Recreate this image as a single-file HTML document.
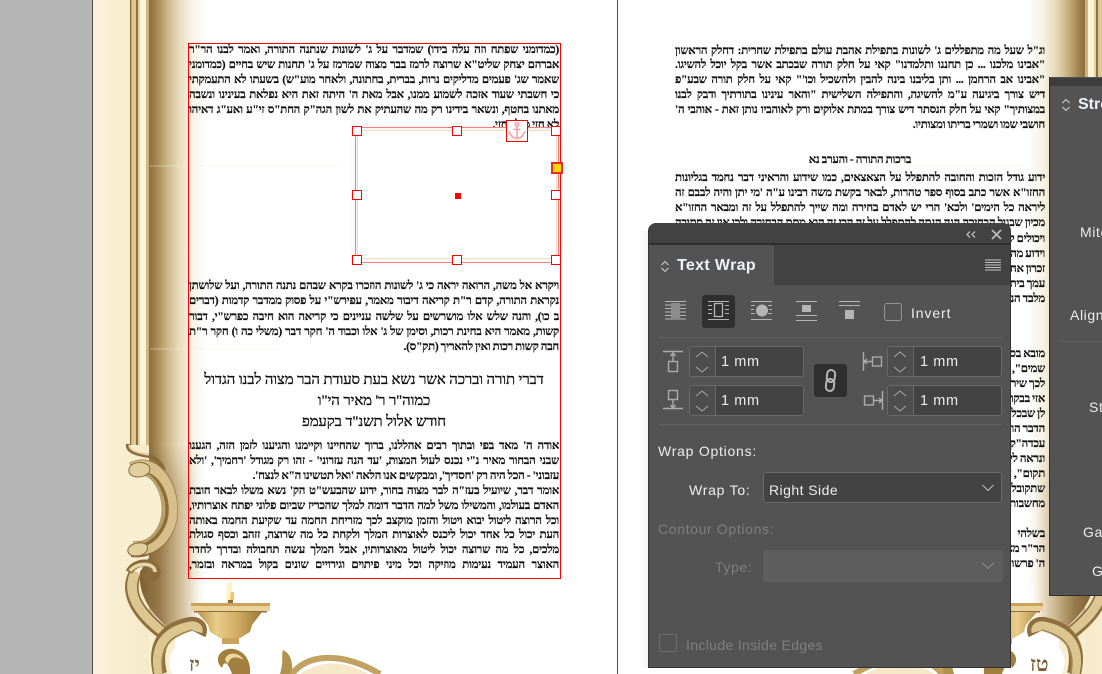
<!DOCTYPE html>
<html><head><meta charset="utf-8"><style>
html,body{margin:0;padding:0;background:#fff}
#r{position:relative;width:1102px;height:674px;overflow:hidden;background:#fff}
.abs{position:absolute}
.l{position:absolute;direction:rtl;font-family:"Liberation Serif","Noto Serif CJK SC",serif;font-size:11.6px;font-weight:700;color:#111;line-height:15px;height:15px;overflow:hidden;text-align:justify;text-align-last:justify;letter-spacing:-.28px;word-spacing:-.4px;-webkit-text-stroke:.2px #222}
.s{text-align:right;text-align-last:right}
.c{text-align:center;text-align-last:center;font-weight:400;color:#111;height:22px;line-height:22px;font-size:14.9px;letter-spacing:-.1px;word-spacing:0;-webkit-text-stroke:.35px #111}
.p{left:189px;width:370px}
.q{left:675px;width:370px}
.u{position:absolute;font-family:"Liberation Sans",sans-serif;font-size:14px;letter-spacing:.6px;color:#ececec;white-space:nowrap;line-height:16px}
.d{color:#7f7f7f}
.f{position:absolute;box-sizing:border-box;background:#434343;border:1px solid #696969;border-radius:3px}
.h{position:absolute;width:10px;height:10px;box-sizing:border-box;background:#fff;border:1.3px solid #f00}
</style></head><body><div id="r">

<svg class="abs" style="left:0;top:0" width="1102" height="674" viewBox="0 0 1102 674">
<defs>
<linearGradient id="fade" x1="0" x2="1" y1="0" y2="0">
<stop offset="0" stop-color="#8f6f3d"/><stop offset=".12" stop-color="#a38550"/><stop offset=".3" stop-color="#c9b283"/><stop offset=".5" stop-color="#e6d9b8"/><stop offset=".72" stop-color="#f7f2e3"/><stop offset="1" stop-color="#fff"/>
</linearGradient>
<linearGradient id="fade2" x1="0" x2="1" y1="0" y2="0">
<stop offset="0" stop-color="#7d5f33"/><stop offset=".3" stop-color="#97794a"/><stop offset=".6" stop-color="#cdb88f"/><stop offset=".85" stop-color="#f2eadb"/><stop offset="1" stop-color="#fff" stop-opacity="0"/>
</linearGradient>
<linearGradient id="cream" x1="0" x2="1" y1="0" y2="0">
<stop offset="0" stop-color="#fbf3dc"/><stop offset=".5" stop-color="#f8eed1"/><stop offset="1" stop-color="#f5e9c8"/>
</linearGradient>
<linearGradient id="vf" x1="0" x2="0" y1="0" y2="1">
<stop offset="0" stop-color="#fff"/><stop offset=".9" stop-color="#fff"/><stop offset="1" stop-color="#000"/>
</linearGradient>
<linearGradient id="vs" gradientUnits="userSpaceOnUse" x1="0" x2="0" y1="445" y2="490">
<stop offset="0" stop-color="#000"/><stop offset="1" stop-color="#fff"/>
</linearGradient>
<mask id="vm" maskUnits="userSpaceOnUse" x="93" y="0" width="130" height="674"><rect x="93" y="0" width="130" height="640" fill="url(#vf)"/></mask>
<mask id="sm" maskUnits="userSpaceOnUse" x="130" y="445" width="90" height="229"><rect x="130" y="445" width="90" height="229" fill="url(#vs)"/></mask>
<linearGradient id="bowl" x1="0" x2="1" y1="0" y2="0">
<stop offset="0" stop-color="#b8924a"/><stop offset=".3" stop-color="#e9cd8a"/><stop offset=".6" stop-color="#d4af66"/><stop offset="1" stop-color="#9c7836"/>
</linearGradient>
<g id="orn">
<rect x="93" y="0" width="58" height="674" fill="url(#cream)"/>
<rect x="149" y="0" width="58" height="640" fill="url(#fade)" mask="url(#vm)"/>
<path d="M150 166H340" stroke="#f5f0e2" stroke-width="1" opacity=".45"/>
<path d="M150 349H280" stroke="#f5f0e2" stroke-width="1" opacity=".45"/>
<path d="M150 533H190" stroke="#c4a878" stroke-width="1"/>
<!-- darker shadow next to the scroll ornaments -->
<path d="M150 445H205V622L170 630C150 612 138 595 140 572L150 556Z" fill="url(#fade2)" mask="url(#sm)"/>
<!-- column -->
<rect x="130" y="0" width="1.4" height="445" fill="#8a6a38"/>
<rect x="131.4" y="0" width="4.6" height="445" fill="#dcc795"/>
<rect x="136" y="0" width="2" height="445" fill="#8f703f"/>
<rect x="138" y="0" width="2" height="445" fill="#e3d2a3"/>
<rect x="140" y="0" width="6" height="445" fill="#fbf3d6"/>
<rect x="146" y="0" width="3" height="445" fill="#cdb582"/>
<!-- cream bite inside the C -->
<path d="M149 462 C158 478 162 495 162 510 C162 526 156 542 146 556 L120 556 L120 462Z" fill="#f8eed1"/>
<path d="M149 612 L149 674 L175 674 L175 640Z" fill="#f8eed1"/>
<!-- S lower -->
<path d="M136 572 C126 588 132 610 164 634" fill="none" stroke="#8f6f3d" stroke-width="13"/>
<path d="M136 572 C127 588 133 609 164 632" fill="none" stroke="#dcc691" stroke-width="10"/>
<path d="M141 574 C133 590 139 606 166 628" fill="none" stroke="#8c6d3a" stroke-width="1.6"/>
<!-- top curl -->
<path d="M128 444 C127 451 135 454 149 456 C156 458 161 463 164 470" fill="none" stroke="#8a6a38" stroke-width="4"/>
<path d="M129 445 C129 450 136 453 149 455" fill="none" stroke="#e6d6a8" stroke-width="1.5"/>
<!-- C band -->
<path d="M133 470 C152 460 170 482 170 510 C170 534 152 552 132 549" fill="none" stroke="#8a6a38" stroke-width="16"/>
<path d="M133 469 C152 459 171 482 171 510 C171 535 152 552 132 548" fill="none" stroke="#d6bf88" stroke-width="13"/>
<path d="M140 473 C155 472 167 490 167 510 C167 528 154 544 140 545" fill="none" stroke="#8b6c3a" stroke-width="3.5"/>
<path d="M140 473 C153 474 163 490 163 510 C163 526 153 540 140 543" fill="none" stroke="#b89e67" stroke-width="3"/>
<path d="M129 469 C131 462 142 460 149 466 C152 472 146 477 138 477 C132 477 128 474 129 469Z" fill="#e2cf9e" stroke="#8a6a38"/>
<path d="M128 549 C130 543 142 541 147 545 C149 551 144 556 136 556 C130 556 127 553 128 549Z" fill="#e2cf9e" stroke="#8a6a38"/>
<!-- second curl -->
<path d="M129 572 C135 560 156 560 157 572 C157 580 146 581 146 573" fill="none" stroke="#8a6a38" stroke-width="7"/>
<path d="M130 571 C136 562 155 562 155 572" fill="none" stroke="#e6d6a8" stroke-width="3.5"/>
<!-- bottom scroll -->
<path d="M160 674 C152 640 170 628 190 624 C198 623 202 628 199 634" fill="none" stroke="#8f6f3d" stroke-width="14"/>
<path d="M159 674 C152 642 170 630 190 626 C196 625 199 628 198 632" fill="none" stroke="#dcc68f" stroke-width="9"/>
<path d="M163 674 C158 646 172 636 192 630" fill="none" stroke="#a5864f" stroke-width="1.6"/>
<path d="M172 674 C165 655 172 643 200 638 L207 640 L207 674Z" fill="#fff"/>
<!-- candle -->
<path d="M227 582h5l1 21h-7z" fill="#fdf2c8"/>
<path d="M231 592h3v8h-4z" fill="#f1c55f"/>
<rect x="228" y="600" width="5" height="4" fill="#8a6a3a"/>
<rect x="191" y="603" width="79" height="3" fill="#c9a35a"/>
<rect x="191" y="606" width="79" height="5" fill="#e9d199"/>
<rect x="194" y="611" width="73" height="1.5" fill="#8f6f3d"/>
<path d="M197 612H262L252 625L250 632L240 638H220L210 632L208 625Z" fill="url(#bowl)"/>
<rect x="222" y="638" width="17" height="6" fill="#c9a35a"/>
<path d="M232 674 C228 662 224 660 222 668 C212 658 222 647 234 649 C247 652 251 664 250 674Z" fill="#a1803f"/>
<path d="M225 660 C226 652 238 651 244 660 C236 656 230 656 228 664Z" fill="#ecd7a3"/>
<!-- arch -->
<path d="M280 674 C284 660 281 656 283 650 C291 654 293 662 292 674Z" fill="#b1924f"/>
<path d="M292 674 C306 655 340 650 380 674" fill="none" stroke="#c2a262" stroke-width="6"/>
<path d="M300 674 C320 660 345 660 368 674Z" fill="#f6e8c8"/>
</g>
</defs>
<rect x="0" y="0" width="92" height="674" fill="#b5b5b5"/>
<rect x="92" y="0" width="1" height="674" fill="#4a4a4a"/>
<use href="#orn"/>
<use href="#orn" transform="translate(1234,0) scale(-1,1)"/>
<rect x="617" y="0" width="1" height="674" fill="#4b4b4b"/>
</svg>

<!-- left text -->
<div class="l p" style="top:42px">(כמדומני שפתח וזה עלה בידו) שמדבר על ג' לשונות שנתנה התורה, ואמר לבנו הר"ר</div>
<div class="l p" style="top:57px">אברהם יצחק שליט"א שרוצה לרמז בבר מצוה שמרמז על ג' תחנות שיש בחיים (כמדומני</div>
<div class="l p" style="top:72px">שאמר שג' פעמים מדליקים נרות, בברית, בחתונה, ולאחר מוע"ש) בשעתו לא התעמקתי</div>
<div class="l p" style="top:87px">כי חשבתי שעוד אזכה לשמוע ממנו, אבל מאת ה' היתה זאת היא נפלאת בעינינו ונשבה</div>
<div class="l p" style="top:102px">מאתנו בחטף, ונשאר בידינו רק מה שהעתיק את לשון הגה"ק החת"ס זי"ע ואע"ג דאיהו</div>
<div class="l p s" style="top:117px">לא חזי מזלי' חזי.</div>

<div class="l p" style="top:278px">ויקרא אל משה, הרואה יראה כי ג' לשונות הוזכרו בקרא שבהם נתנה התורה, ועל שלושתן</div>
<div class="l p" style="top:293px">נקראת התורה, קדם ר"ת קריאה דיבור מאמר, עפירש"י על פסוק ממדבר קדמות (דברים</div>
<div class="l p" style="top:309px">ב כו), והנה שלש אלו מושרשים על שלשה עניינים כי קריאה הוא חיבה כפרש"י, דבור</div>
<div class="l p" style="top:324px">קשות, מאמר היא בחינת רכות, וסימן של ג' אלו וכבוד ה' חקר דבר (משלי כה ו) חקר ר"ת</div>
<div class="l p s" style="top:339px">חבה קשות רכות ואין להאריך (תק"ס).</div>

<div class="l p c" style="top:369px">דברי תורה וברכה אשר נשא בעת סעודת הבר מצוה לבנו הגדול</div>
<div class="l p c" style="top:390px">כמוה"ר ר' מאיר הי"ו</div>
<div class="l p c" style="top:411px">חודש אלול תשנ"ד בקעמפ</div>

<div class="l p" style="top:438px">אודה ה' מאד בפי ובתוך רבים אהללנו, ברוך שהחיינו וקיימנו והגיענו לזמן הזה, הגענו</div>
<div class="l p" style="top:453px">שבני הבחור מאיר נ"י נכנס לעול המצות, 'עד הנה עזרוני' - זהו רק מגודל 'רחמיך', 'ולא</div>
<div class="l p s" style="top:468px">עזבוני' - הכל היה רק 'חסדיך', ומבקשים אנו הלאה 'ואל תטשינו ה"א לנצח'.</div>
<div class="l p" style="top:483px">אומר דבר, שיועיל בעז"ה לבר מצוה בחור, ידוע שהבעש"ט הק' נשא משלו לבאר חובת</div>
<div class="l p" style="top:498px">האדם בעולמו, והמשילו משל למה הדבר דומה למלך שהכריז שביום פלוני יפתח אוצרותיו,</div>
<div class="l p" style="top:513px">וכל הרוצה ליטול יבוא ויטול והזמן מוקצב לכך מזריחת החמה עד שקיעת החמה באותה</div>
<div class="l p" style="top:527px">העת יכול כל אחד יכול ליכנס לאוצרות המלך ולקחת כל מה שרוצה, זזהב וכסף סגולת</div>
<div class="l p" style="top:542px">מלכים, כל מה שרוצה יכול ליטול מאוצרותיו, אבל המלך עשה תחבולה ובדרך לחדר</div>
<div class="l p" style="top:557px">האוצר העמיד נעימות מוזיקה וכל מיני פיתוים וגירויים שונים בקול במראה ובזמר,</div>

<!-- right text -->
<div class="l q" style="top:43px">וג"ל שעל מה מתפללים ג' לשונות בתפילת אהבת עולם בתפילת שחרית: דחלק הראשון</div>
<div class="l q" style="top:57px">"אבינו מלכנו ... כן תחננו ותלמדנו" קאי על חלק תורה שבכתב אשר בקל יוכל להשיגו.</div>
<div class="l q" style="top:72px">"אבינו אב הרחמן ... ותן בליבנו בינה להבין ולהשכיל וכו'" קאי על חלק תורה שבע"פ</div>
<div class="l q" style="top:87px">דיש צורך ביגיעה ע"מ להשיגה, והתפילה השלישית "והאר עינינו בתורתיך ודבק לבנו</div>
<div class="l q" style="top:102px">במצותיך" קאי על חלק הנסתר דיש צורך במתת אלוקים ורק לאוהביו נותן זאת - אוהבי ה'</div>
<div class="l q s" style="top:117px">חושבי שמו ושמרי בריתו ומצותיו.</div>
<div class="l q" style="top:152px;text-align:center;text-align-last:center">ברכות התורה - והערב נא</div>
<div class="l q" style="top:170px">ידוע גודל הזכות והחובה להתפלל על הצאצאים, כמו שידוע והראיני דבר נחמד בגליונות</div>
<div class="l q" style="top:185px">החזו"א אשר כתב בסוף ספר טהרות, לבאר בקשת משה רבינו ע"ה 'מי יתן והיה לבבם זה</div>
<div class="l q" style="top:200px">ליראה כל הימים' ולכא' הרי יש לאדם בחירה ומה שייך להתפלל על זה ומבאר החזו"א</div>
<div class="l q" style="top:215px">מכיון שבגיל הבחירה הנה הנתה להתפלל על זה הרי זה הוא מתת הבחירה ולכן אין זה סתירה</div>
<div class="l q s" style="top:231px">ויכולים להתפלל</div>
<div class="l q s" style="top:246px">וידוע מה</div>
<div class="l q s" style="top:261px">זכרון אחד</div>
<div class="l q s" style="top:276px">עמך בית</div>
<div class="l q s" style="top:291px">מלבד הנה</div>
<div class="l q s" style="top:346px">מובא בספר</div>
<div class="l q s" style="top:361px">שמים", וגם</div>
<div class="l q s" style="top:376px">לכך שירה</div>
<div class="l q s" style="top:391px">אזי בבקר</div>
<div class="l q s" style="top:406px">לן שבכל</div>
<div class="l q s" style="top:421px">הדבר הוא</div>
<div class="l q s" style="top:436px">עכדה"ק</div>
<div class="l q s" style="top:451px">ונראה לי</div>
<div class="l q s" style="top:466px">תקום", הנה</div>
<div class="l q s" style="top:481px">שתקובל</div>
<div class="l q s" style="top:496px">מחשבות</div>
<div class="l q s" style="top:526px">בשלהי</div>
<div class="l q s" style="top:541px">הר"ר מאיר</div>
<div class="l q s" style="top:556px">ה' פרשו</div>

<div class="abs" style="left:189px;top:654px;font:700 20px 'Liberation Serif',serif;color:#7c5f35;direction:rtl">יז</div>
<div class="abs" style="left:1030px;top:652px;font:700 21px 'Liberation Serif',serif;color:#7c5f35;direction:rtl">טז</div>

<!-- text frame -->
<div class="abs" style="left:188px;top:43px;width:373px;height:536px;box-sizing:border-box;border:1.3px solid #f00"></div>

<!-- selected image -->
<div class="abs" style="left:355px;top:127px;width:204px;height:136px;box-sizing:border-box;border:1px solid #ff8080"></div>
<div class="abs" style="left:357px;top:130px;width:200px;height:129px;box-sizing:border-box;background:#fff;border:1px solid #efe0c0;border-radius:7px;box-shadow:0 0 9px rgba(120,110,90,.16)"></div>
<div class="h" style="left:352px;top:126px"></div><div class="h" style="left:452px;top:126px"></div><div class="h" style="left:551px;top:126px"></div>
<div class="h" style="left:352px;top:190px"></div><div class="h" style="left:551px;top:190px"></div>
<div class="h" style="left:352px;top:255px"></div><div class="h" style="left:452px;top:255px"></div><div class="h" style="left:551px;top:255px"></div>
<div class="abs" style="left:455px;top:193px;width:6px;height:6px;background:#f00"></div>
<div class="abs" style="left:551px;top:162px;width:12px;height:12px;box-sizing:border-box;background:#ffd800;border:2px solid #e8282a"></div>
<div class="abs" style="left:506px;top:120px;width:22px;height:22px;box-sizing:border-box;background:#fff;border:1.3px solid #f00"></div>
<svg class="abs" style="left:506px;top:120px" width="22" height="22" fill="none" stroke="#ff9a9a" stroke-width="1.5"><circle cx="11" cy="4.5" r="1.7"/><path d="M11 6.5V18M7.5 9.5h7M3 11.5l1.5 2.5c1 3 3.5 4 6.5 4.5 3-.5 5.5-1.5 6.5-4.5l1.5-2.5"/></svg>

<!-- Stroke panel -->
<div class="abs" style="left:1049px;top:77px;width:53px;height:519px;background:#535353;box-sizing:border-box;border-left:1px solid #2e2e2e;border-bottom:1px solid #2e2e2e"></div>
<div class="abs" style="left:1050px;top:78px;width:52px;height:8px;background:#3d3d3d"></div>
<svg class="abs" style="left:1060px;top:97px" width="12" height="16" fill="none" stroke="#bdbdbd" stroke-width="1.3"><path d="M2.5 6L6 2.5 9.5 6M2.5 10L6 13.5 9.5 10"/></svg>
<div class="u" style="left:1078px;top:96px;font-size:16px;font-weight:700;letter-spacing:0;color:#eef4fb;line-height:18px">Stroke</div>
<div class="u" style="left:1080px;top:224px">Miter Limit</div>
<div class="u" style="left:1070px;top:307px">Align Stroke</div>
<div class="abs" style="left:1059px;top:341px;width:43px;height:1px;background:#5f5f5f"></div>
<div class="u" style="left:1089px;top:399px">Start</div>
<div class="u" style="left:1083px;top:524px">Gap</div>
<div class="u" style="left:1092px;top:563px">Gap</div>

<!-- Text Wrap panel -->
<div class="abs" style="left:638px;top:231px;width:12px;height:437px;background:linear-gradient(90deg,rgba(0,0,0,0),rgba(0,0,0,.05))"></div>
<div class="abs" style="left:648px;top:223px;width:363px;height:445px;background:#535353;border-radius:8px 8px 0 0;box-sizing:border-box;border:1px solid #333;border-top:0;overflow:hidden">
  <div class="abs" style="left:0;top:0;width:362px;height:20px;background:#424242"></div>
  <div class="abs" style="left:0;top:20px;width:362px;height:2px;background:#2f2f2f"></div>
  <div class="abs" style="left:125px;top:22px;width:237px;height:40px;background:#424242"></div>
</div>
<svg class="abs" style="left:648px;top:220px" width="370" height="220" fill="none" stroke="#b9b9b9">
<path d="M322 11.5l-3 3 3 3M327 11.5l-3 3 3 3" stroke-width="1.3"/>
<path d="M344 10l9 9M353 10l-9 9" stroke-width="1.8"/>
<path d="M13.5 45L17 41.5 20.5 45M13.5 48L17 51.5 20.5 48" stroke-width="1.3"/>
<path d="M337 40h16M337 42.5h16M337 45h16M337 47.5h16M337 50h16" stroke-width="1" stroke="#c4c4c4"/>
</svg>
<div class="u" style="left:677px;top:257px;font-size:16px;font-weight:700;letter-spacing:.35px;color:#eef2f7;line-height:18px">Text Wrap</div>

<div class="abs" style="left:702px;top:295px;width:33px;height:33px;background:#2f2f2f;border-radius:3px"></div>
<svg class="abs" style="left:648px;top:220px" width="370" height="220" fill="none" stroke="#b5b5b5" stroke-width="1">
<!-- icon 1 -->
<path d="M17 81.5h21M17 85h21M17 88.5h21M17 92h21M17 95.5h21M17 99h21"/><rect x="23" y="83" width="9" height="15" fill="#8c8c8c" stroke="none"/>
<!-- icon 2 -->
<path d="M60 81.5h21M60 99.5h21M60 85.5h4M60 89.5h4M60 93.5h4M77 85.5h4M77 89.5h4M77 93.5h4"/><rect x="66.5" y="83.5" width="8" height="13" stroke-width="1.3"/>
<!-- icon 3 -->
<path d="M103 81.5h21M103 99.5h21M103 85.5h4M103 89.5h3M103 93.5h4M120 85.5h4M121 89.5h3M120 93.5h4"/><circle cx="114" cy="90.5" r="6" fill="#b5b5b5" stroke="none"/>
<!-- icon 4 -->
<path d="M148 81.5h21M148 95.5h21M148 100.5h21"/><rect x="154" y="85" width="9" height="7" fill="#b5b5b5" stroke="none"/>
<!-- icon 5 -->
<path d="M191 81.5h21M191 85.5h21"/><rect x="197" y="90" width="9" height="9" fill="#b5b5b5" stroke="none"/>
<!-- offset icons -->
<g stroke-width="1.4" stroke="#ababab">
<path d="M15 131.5h20M25 133v8M22.5 136l2.5-3 2.5 3"/><rect x="20.5" y="141.5" width="9" height="10"/>
<path d="M15 188.5h20M25 180v8M22.5 185l2.5 3 2.5-3"/><rect x="20.5" y="170.5" width="9" height="9"/>
<path d="M215.5 132v19M216 141.5h8M219 139l-3 2.5 3 2.5"/><rect x="224.5" y="137" width="9" height="9"/>
<path d="M234.5 171v19M226 180.5h8M231 178l3 2.5-3 2.5"/><rect x="216.5" y="176" width="9" height="9"/>
</g>
</svg>

<div class="f" style="left:884px;top:303px;width:18px;height:18px;background:#545454;border-color:#959595"></div>
<div class="u" style="left:911px;top:305px;letter-spacing:.9px">Invert</div>
<div class="abs" style="left:658px;top:337px;width:344px;height:1px;background:#5f5f5f"></div>
<div class="abs" style="left:658px;top:424px;width:344px;height:1px;background:#5f5f5f"></div>

<div class="f" style="left:689px;top:346px;width:115px;height:31px"><div class="abs" style="left:0;top:0;width:25px;height:29px;background:#4d4d4d;border-right:1px solid #696969"></div></div>
<div class="f" style="left:689px;top:385px;width:115px;height:31px"><div class="abs" style="left:0;top:0;width:25px;height:29px;background:#4d4d4d;border-right:1px solid #696969"></div></div>
<div class="f" style="left:887px;top:346px;width:115px;height:31px"><div class="abs" style="left:0;top:0;width:25px;height:29px;background:#4d4d4d;border-right:1px solid #696969"></div></div>
<div class="f" style="left:887px;top:385px;width:115px;height:31px"><div class="abs" style="left:0;top:0;width:25px;height:29px;background:#4d4d4d;border-right:1px solid #696969"></div></div>
<svg class="abs" style="left:648px;top:340px" width="370" height="90" fill="none" stroke="#a8a8a8" stroke-width="1">
<path d="M48 17l6-5 6 5M48 27l6 5 6-5M48 56l6-5 6 5M48 66l6 5 6-5M246 17l6-5 6 5M246 27l6 5 6-5M246 56l6-5 6 5M246 66l6 5 6-5"/>
</svg>
<div class="u" style="left:721px;top:354px;font-size:14.5px">1 mm</div>
<div class="u" style="left:721px;top:393px;font-size:14.5px">1 mm</div>
<div class="u" style="left:920px;top:354px;font-size:14.5px">1 mm</div>
<div class="u" style="left:920px;top:393px;font-size:14.5px">1 mm</div>

<div class="abs" style="left:814px;top:364px;width:33px;height:33px;background:#2f2f2f;border-radius:3px"></div>
<svg class="abs" style="left:814px;top:364px" width="33" height="33" fill="none" stroke="#b5b5b5" stroke-width="2"><g transform="rotate(6 16.5 16.5)"><rect x="12.5" y="6" width="8" height="12" rx="4"/><rect x="12.5" y="15" width="8" height="12" rx="4"/></g></svg>

<div class="u" style="left:658px;top:443px;letter-spacing:.75px">Wrap Options:</div>
<div class="u" style="left:689px;top:482px;letter-spacing:.75px">Wrap To:</div>
<div class="f" style="left:763px;top:472px;width:239px;height:31px"></div>
<div class="u" style="left:769px;top:482px;letter-spacing:.45px">Right Side</div>
<svg class="abs" style="left:980px;top:482px" width="16" height="12" fill="none" stroke="#bdbdbd"><path d="M2.5 3l5.5 5.5L13.5 3"/></svg>
<div class="u d" style="left:658px;top:521px;letter-spacing:.65px">Contour Options:</div>
<div class="u d" style="left:715px;top:559px">Type:</div>
<div class="abs" style="left:763px;top:550px;width:240px;height:32px;background:#5d5d5d;border-radius:3px"></div>
<svg class="abs" style="left:980px;top:560px" width="16" height="12" fill="none" stroke="#8f8f8f"><path d="M2.5 3l5.5 5.5L13.5 3"/></svg>
<div class="abs" style="left:659px;top:634px;width:18px;height:18px;box-sizing:border-box;border:1px solid #6e6e6e;border-radius:2px"></div>
<div class="u d" style="left:686px;top:637px;letter-spacing:.35px">Include Inside Edges</div>

</div></body></html>
